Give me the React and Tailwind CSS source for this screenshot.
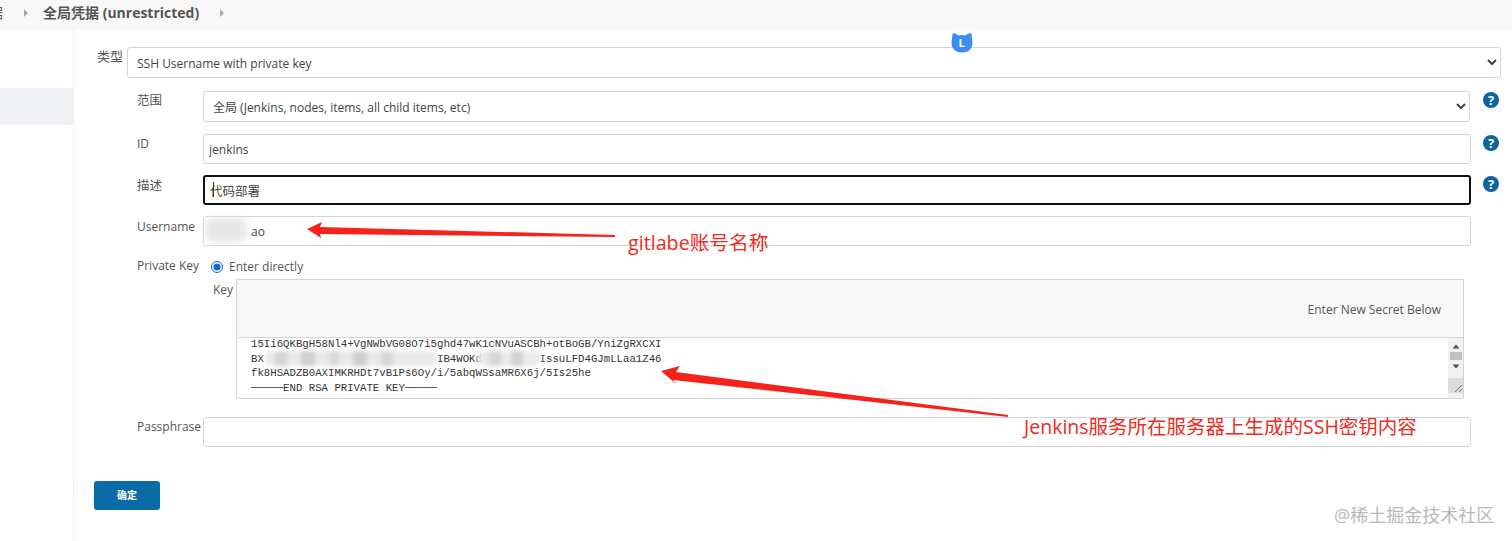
const sans = 'font-["Open_Sans","Noto_Sans_CJK_SC",sans-serif]'

function Help() {
  return (
    <span className="ml-[13px] mt-[1px] grid h-[16px] w-[16px] shrink-0 place-items-center rounded-full bg-[#0b669f] text-[13px] font-bold leading-none text-white">?</span>
  )
}

function Label({ children, className = 'pt-[2px]' }) {
  return <label className={`w-[66px] shrink-0 text-[12px] leading-[18px] text-[#555] ${className}`}>{children}</label>
}

function TextBox({ value, className = 'h-[30px] border border-[#d4d4d4] text-[12px]' }) {
  return (
    <input
      readOnly
      value={value}
      className={`w-[1268px] rounded-[3px] bg-white px-[5px] text-[#444] outline-none ${className}`}
    />
  )
}

function KeyBox() {
  return (
    <div className="w-[1228px]">
      <div className="flex h-[59px] items-center justify-end border border-[#d4d4d4] bg-[#f8f8f8] pr-[22px] pt-[3px] text-[12px] text-[#555]">
        Enter New Secret Below
      </div>
      <div className="relative flex h-[61px] rounded-b-[3px] border border-t-0 border-[#d4d4d4] bg-white">
        <pre className="-mt-[1px] flex-1 overflow-hidden pl-[14px] font-['Liberation_Mono',monospace] text-[10.7px] leading-[14.6px] text-[#333]">
{`15Ii6QKBgH58Nl4+VgNWbVG08O7i5ghd47wK1cNVuASCBh+otBoGB/YniZgRXCXI
BX                           IB4WOKdF        IssuLFD4GJmLLaa1Z46
fk8HSADZB0AXIMKRHDt7vB1Ps6Oy/i/5abqWSsaMR6X6j/5Is25he
─────END RSA PRIVATE KEY─────`}
        </pre>
        <div className="flex w-[15px] flex-col items-center bg-[#f1f1f1]">
          <svg width="8" height="5" viewBox="0 0 8 5" className="mt-[6px]"><path d="M4 0.5 7.5 4.5H.5z" fill="#505050" /></svg>
          <div className="mt-[3px] h-[8px] w-[12px] bg-[#c1c1c1]" />
          <svg width="8" height="5" viewBox="0 0 8 5" className="mt-[4px]"><path d="M4 4.5 7.5.5H.5z" fill="#505050" /></svg>
          <div className="mt-auto mb-[5px] h-[15px] w-[15px] bg-[#dcdcdc]">
            <svg width="15" height="15" viewBox="0 0 15 15"><path d="M14 7 7 14M14 11l-3 3" stroke="#777" fill="none" /></svg>
          </div>
        </div>
        {/* blurred parts of the key */}
        <div className="absolute left-[28px] top-[13px] flex h-[15px] w-[172px] gap-[14px] rounded-[6px] bg-[#e9e9e9] pl-[10px] blur-[2px]">
          <span className="w-[12px] bg-[#d4d4d4]" />
          <span className="w-[14px] bg-[#cfcfcf]" />
          <span className="w-[10px] bg-[#d8d8d8]" />
          <span className="w-[14px] bg-[#cfcfcf]" />
          <span className="w-[12px] bg-[#d6d6d6]" />
        </div>
        <div className="absolute left-[240px] top-[13px] flex h-[15px] w-[64px] gap-[10px] rounded-[6px] bg-[#ebebeb] pl-[12px] blur-[2px]">
          <span className="w-[12px] bg-[#d6d6d6]" />
          <span className="w-[12px] bg-[#d2d2d2]" />
        </div>
      </div>
    </div>
  )
}

export default function App() {
  return (
    <div className={`relative h-[541px] w-[1512px] overflow-hidden bg-white ${sans}`}>
      <header className="flex h-[30px] items-center bg-[#f8f8f8] pb-[5px] text-[#555]">
        <span className="h-[18px] w-[3px] overflow-hidden text-[14px] leading-[18px] [direction:rtl]">据</span>
        <svg width="4" height="8" viewBox="0 0 4 8" className="ml-[21px]"><path d="M0 0 4 4 0 8z" fill="#aaa" /></svg>
        <span className="ml-[15px] text-[14px] font-bold">全局凭据 (unrestricted)</span>
        <svg width="4" height="8" viewBox="0 0 4 8" className="ml-[21px]"><path d="M0 0 4 4 0 8z" fill="#aaa" /></svg>
      </header>

      <div className="flex h-[511px]">
        <aside className="w-[74px] shrink-0 border-r border-[#eeeeee] pt-[58px]">
          <div className="h-[37px] bg-[#eef0f3]" />
        </aside>

        <main className="flex-1 pl-[20px] pt-[17px]">
          <div className="flex">
            <label className="w-[33px] shrink-0 pl-[3px] text-[13px] leading-[18px] text-[#555]">类型</label>
            <select className="h-[31px] w-[1374px] rounded-[3px] border border-[#d4d4d4] bg-white pl-[5px] pt-[1px] text-[12px] text-[#444] outline-none">
              <option>SSH Username with private key</option>
            </select>
          </div>

          <div className="ml-[43px]">
            <div className="mt-[13px] flex">
              <Label className="pt-[1px]"><span className="text-[12.5px]">范围</span></Label>
              <select className="h-[31px] w-[1267px] rounded-[3px] border border-[#d4d4d4] bg-white pl-[5px] pt-[1px] text-[12px] text-[#444] outline-none">
                <option>全局 (Jenkins, nodes, items, all child items, etc)</option>
              </select>
              <Help />
            </div>

            <div className="mt-[12px] flex">
              <Label className="pt-[1px]">ID</Label>
              <TextBox value="jenkins" />
              <span className="-ml-px"><Help /></span>
            </div>

            <div className="relative mt-[11px] flex">
              <Label><span className="text-[12.5px]">描述</span></Label>
              <TextBox value="代码部署" className="h-[30px] border-2 border-[#111] text-[12.5px]" />
              <span className="-ml-px"><Help /></span>
              <span className="absolute left-[76px] top-[7px] h-[15px] w-px bg-[#333]" />
            </div>

            <div className="relative mt-[11px] flex">
              <Label>Username</Label>
              <TextBox value="ao" className="h-[30px] border border-[#d4d4d4] pl-[47px] text-[12px]" />
              <div className="absolute left-[68px] top-[2px] h-[24px] w-[42px] rounded-[8px] bg-[#e8e8e8] blur-[3px]" />
            </div>

            <div className="mt-[9px] flex">
              <Label>Private Key</Label>
              <div className="flex-1">
                <div className="flex h-[21px] items-center pl-[8px] pt-[2px] text-[12px] text-[#555]">
                  <input readOnly type="radio" checked className="h-[12px] w-[12px] accent-[#0b69d8]" />
                  <span className="ml-[6px]">Enter directly</span>
                </div>
                <div className="mt-[3px] flex pl-[10px]">
                  <span className="w-[23px] pt-[2px] text-[12px] leading-[18px] text-[#555]">Key</span>
                  <KeyBox />
                </div>
              </div>
            </div>

            <div className="mt-[18px] flex">
              <Label className="pt-[1px]">Passphrase</Label>
              <TextBox value="" />
            </div>
          </div>

          <button className="mt-[34px] h-[29px] w-[66px] rounded-[3px] bg-[#0b6ba6] text-[10px] font-bold text-white">确定</button>
        </main>
      </div>

      {/* blue mascot badge */}
      <svg width="22" height="21" viewBox="0 0 22 21" className="absolute left-[951px] top-[32px]">
        <path d="M1.5 1.5Q4 .5 7.5 3.5Q11 2.5 14.5 3.5Q18 .5 20.5 1.5L21.5 11Q21 20.5 11 20.5 1 20.5 .5 11z" fill="#3c8df0" />
        <text x="7.5" y="15" fontSize="11" fontWeight="700" fill="#fff" fontFamily="Open Sans, sans-serif">L</text>
      </svg>

      {/* red annotations */}
      <svg width="1512" height="541" viewBox="0 0 1512 541" className="pointer-events-none absolute left-0 top-0">
        <path d="M307 229 322 222 320 227 615 235 615 237 320 234 321 238z" fill="#f5231c" />
        <path d="M661 371 680 366 676 372 1008 415 1008 417 673 380 676 384z" fill="#f5231c" />
      </svg>
      <span className="absolute left-[628px] top-[231px] text-[19.7px] leading-[24px] text-[#ef2a20]">gitlabe账号名称</span>
      <span className="absolute left-[1024px] top-[415px] text-[19.5px] leading-[24px] text-[#ef2a20]">Jenkins服务所在服务器上生成的SSH密钥内容</span>
      <span className="absolute left-[1334px] top-[503px] text-[18px] leading-[24px] text-[#b9b9b9]">@稀土掘金技术社区</span>
    </div>
  )
}
